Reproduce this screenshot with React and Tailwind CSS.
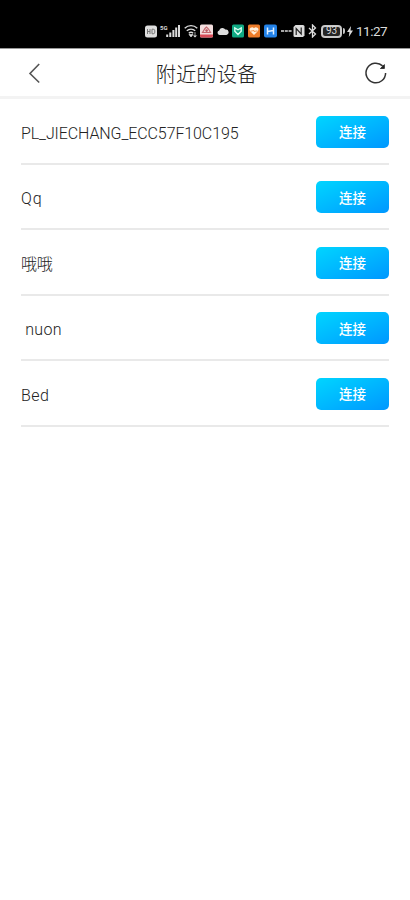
const devices = [
  { id: 1, name: 'PL_JIECHANG_ECC57F10C195', spacing: 'tracking-[-0.1px]' },
  { id: 2, name: 'Qq', spacing: 'tracking-[0.8px]' },
  { id: 3, name: '哦哦', spacing: 'tracking-[-0.3px]' },
  { id: 4, name: ' nuon', spacing: 'tracking-[0.3px]' },
  { id: 5, name: 'Bed', spacing: 'tracking-[0.4px]' },
];

function StatusBar() {
  return (
    <div className="flex h-12 items-center bg-black pl-[145px] pt-[14px] text-[#dcdcdc]">
      {/* HD */}
      <svg className="h-[13px] w-[12px] shrink-0" viewBox="0 0 12 13">
        <rect x="0" y="0.5" width="12" height="12" rx="2.5" fill="#dedede" />
        <path d="M2.5 4v5M5 4v5M2.5 6.5H5M7 4.2v4.6h1.2a1.6 1.6 0 0 0 1.6-1.6V5.8a1.6 1.6 0 0 0-1.6-1.6z" fill="none" stroke="#777" strokeWidth="1" />
      </svg>
      {/* signal */}
      <div className="ml-[3px] flex h-[14px] w-[20px] shrink-0">
        <span className="text-[6px] font-bold leading-[7px]">5G</span>
        <svg className="-ml-[2px] h-[14px] w-[14px] shrink-0" viewBox="0 0 14 14">
          <path d="M1.2 10.5V13M4.3 8.5V13M7.4 6V13M10.2 3.5V13M13 1V13" stroke="#dcdcdc" strokeWidth="2" fill="none" />
        </svg>
      </div>
      {/* wifi */}
      <svg className="ml-[4px] h-[14px] w-[14px] shrink-0" viewBox="0 0 14 14">
        <path d="M0.7 4.2C4.3 0.7 9.7 0.7 13.3 4.2M2.8 6.8c2.4-2.3 6-2.3 8.4 0M4.8 9.2c1.3-1.1 3.1-1.1 4.4 0" fill="none" stroke="#dcdcdc" strokeWidth="1.4" />
        <path d="M7 13 5 10.5h4zM11 8v5M9.4 11.5 11 13.2l1.6-1.7" fill="#dcdcdc" stroke="#dcdcdc" strokeWidth="0.7" />
      </svg>
      <svg className="ml-[2px] h-[14px] w-[13px] shrink-0" viewBox="0 0 13 14">
        <rect y="0.5" width="13" height="13" rx="1.5" fill="#f3dede" />
        <path d="M0 10.5h13V12a1.5 1.5 0 0 1-1.5 1.5h-10A1.5 1.5 0 0 1 0 12z" fill="#d94c58" />
        <path d="M2.5 8.5 5 4.5 6.5 3 8.5 5l2 3.5z" fill="none" stroke="#c46a70" strokeWidth="1.2" />
        <circle cx="6.6" cy="6.6" r="1.3" fill="#be5860" />
      </svg>
      <svg className="ml-[4px] h-[10px] w-[12px] shrink-0" viewBox="0 0 12 10">
        <path d="M2.5 9a2.3 2.3 0 0 1-.3-4.5A3.3 3.3 0 0 1 8.3 3.6 2.7 2.7 0 1 1 9.4 9z" fill="#dedede" />
      </svg>
      <svg className="ml-[3px] h-[14px] w-[12px] shrink-0" viewBox="0 0 12 14">
        <rect y="0.5" width="12" height="13" rx="1.5" fill="#10a983" />
        <path d="M6 10.5 2.8 7.2V4l3.2 1.8L9.2 4v3.2z" fill="none" stroke="#d9fff2" strokeWidth="1.4" />
      </svg>
      <svg className="ml-[4px] h-[14px] w-[12px] shrink-0" viewBox="0 0 12 14">
        <rect y="0.5" width="12" height="13" rx="1.5" fill="#ed7c29" />
        <path d="M6 11 2.2 7.2a2.3 2.3 0 0 1 3.8-3 2.3 2.3 0 0 1 3.8 3z" fill="#fff0dc" />
        <path d="M2.5 7h2l1-1 1 2 1-1h2" fill="none" stroke="#ed7c29" strokeWidth="0.8" />
      </svg>
      <svg className="ml-[4px] h-[14px] w-[13px] shrink-0" viewBox="0 0 13 14">
        <rect y="0.5" width="13" height="13" rx="2" fill="#2382e8" />
        <path d="M3.5 3.5v7M9.5 3.5v7M3.5 7.5 9.5 6.5" fill="none" stroke="#e3f1ff" strokeWidth="1.5" />
      </svg>
      <svg className="ml-[4px] h-[4px] w-[11px] shrink-0" viewBox="0 0 11 4">
        <path d="M0 2h3M3.8 2h3M7.6 2h3" stroke="#dcdcdc" strokeWidth="1.6" />
      </svg>
      {/* nfc */}
      <svg className="ml-[1px] h-[14px] w-[12px] shrink-0" viewBox="0 0 12 14">
        <path d="M2.5 1H10a1.5 1.5 0 0 1 1.5 1.5v9L10 13H2a1.5 1.5 0 0 1-1.5-1.5V3z" fill="#dcdcdc" />
        <path d="M3.2 11V4.5l5 5.5V3.5" fill="none" stroke="#222" strokeWidth="1.2" />
      </svg>
      {/* bluetooth */}
      <svg className="ml-[3px] h-[14px] w-[9px] shrink-0" viewBox="0 0 9 14">
        <path d="m1 4 6.5 6L4.5 13V1l3 3L1 10" fill="none" stroke="#dcdcdc" strokeWidth="1.3" />
      </svg>
      {/* battery */}
      <div className="ml-[4px] flex h-[13px] w-[21px] shrink-0 items-center justify-center rounded-[4px] border-2 border-[#c8c8c8] bg-[#252525] text-[10px] leading-none">
        93
      </div>
      <div className="ml-px h-[6px] w-[2px] shrink-0 rounded-r bg-[#c8c8c8]" />
      <svg className="ml-[2px] h-[11px] w-[6px] shrink-0" viewBox="0 0 6 11">
        <path d="M4 0 0 6h2.4L1.8 11 6 4.5H3.5z" fill="#dcdcdc" />
      </svg>
      <span className="ml-[3px] pt-px text-[13.5px] leading-none tracking-[-0.5px]">11:27</span>
    </div>
  );
}

function Header() {
  return (
    <header className="flex h-[51px] items-center justify-between border-t border-b-[3px] border-t-[#999] border-b-[#f3f3f3] pl-[28px] pr-[22px]">
      <button className="flex w-[21px]">
        <svg className="h-[22px] w-[13px]" viewBox="0 0 13 22">
          <path d="M11.2 2 2 11.5l9.2 9" fill="none" stroke="#555" strokeWidth="1.6" />
        </svg>
      </button>
      <h1 className="pt-[5px] text-[20.3px] font-light leading-none text-[#222]">附近的设备</h1>
      <button className="flex w-[24px] justify-center">
        <svg className="h-[24px] w-[24px]" viewBox="0 0 24 24">
          <path d="M18.6 4.9A9.8 9.8 0 1 0 21.6 12" fill="none" stroke="#333" strokeWidth="1.5" />
          <path d="M20.4 3.6v3.9h-4z" fill="#222" stroke="#222" strokeWidth="0.8" />
        </svg>
      </button>
    </header>
  );
}

function DeviceRow({ device }) {
  return (
    <li className="flex h-[65.5px] items-center justify-between border-b-2 border-[#e9e9e9] pt-[2px]">
      <span className={`whitespace-pre pt-[4px] text-[16px] font-light leading-none text-[#222] ${device.spacing}`}>
        {device.name}
      </span>
      <button className="flex h-8 w-[73px] items-center justify-center rounded-[5px] bg-linear-to-br from-[#00d5ff] to-[#0097ff] pt-[2px] text-[13.5px] font-medium leading-none text-white">
        连接
      </button>
    </li>
  );
}

function App() {
  return (
    <div className="h-[900px] w-[410px] overflow-hidden bg-white font-[Roboto,'Noto_Sans_CJK_SC',sans-serif]">
      <StatusBar />
      <Header />
      <ul className="px-[21px]">
        {devices.map((device) => (
          <DeviceRow key={device.id} device={device} />
        ))}
      </ul>
    </div>
  );
}

export default App;
